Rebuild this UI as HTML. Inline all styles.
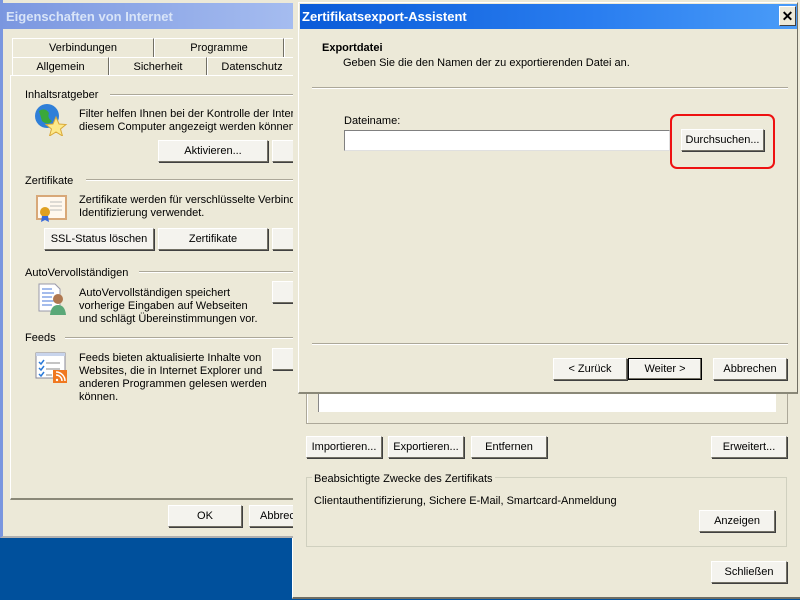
<!DOCTYPE html>
<html><head><meta charset="utf-8"><style>
*{margin:0;padding:0;box-sizing:border-box}
body{width:800px;height:600px;overflow:hidden;background:#00509c;font-family:"Liberation Sans",sans-serif;font-size:11px;color:#000;position:relative}
.a{position:absolute}
.t{position:absolute;white-space:nowrap;line-height:13px}
.btn{position:absolute;background:#f4f3ee;border:1px solid #fff;border-right-color:#716f64;border-bottom-color:#716f64;box-shadow:1px 1px 0 #404040;text-align:center;line-height:20px;white-space:nowrap;overflow:hidden}
.ln{position:absolute;height:2px;border-top:1px solid #aca899;border-bottom:1px solid #fff}
.tab{position:absolute;background:#ece9d8;border:1px solid #fff;border-right-color:#716f64;border-bottom:none;text-align:center;line-height:19px}
</style></head><body>
<!-- back certificate dialog -->
<div class="a" style="left:292px;top:0;width:508px;height:599px;background:#ece9d8;border-left:1px solid #fff;border-bottom:2px solid #716f64"></div>
<div class="a" style="left:306px;top:370px;width:482px;height:54px;border:1px solid #aca899;border-top:none;box-shadow:1px 1px 0 #fff inset"></div>
<div class="a" style="left:318px;top:390px;width:458px;height:22px;background:#fff;border-left:1px solid #888"></div>
<div class="btn" style="left:306px;top:436px;width:76px;height:22px">Importieren...</div>
<div class="btn" style="left:388px;top:436px;width:76px;height:22px">Exportieren...</div>
<div class="btn" style="left:471px;top:436px;width:76px;height:22px">Entfernen</div>
<div class="btn" style="left:711px;top:436px;width:76px;height:22px">Erweitert...</div>
<div class="a" style="left:306px;top:477px;width:481px;height:70px;border:1px solid #d0d0bf"></div>
<div class="t" style="left:312px;top:473px;background:#ece9d8;padding:0 2px">Beabsichtigte Zwecke des Zertifikats</div>
<div class="t" style="left:314px;top:495px">Clientauthentifizierung, Sichere E-Mail, Smartcard-Anmeldung</div>
<div class="btn" style="left:699px;top:510px;width:76px;height:22px">Anzeigen</div>
<div class="btn" style="left:711px;top:561px;width:76px;height:22px">Schließen</div>

<!-- left window -->
<div class="a" style="left:0;top:0;width:293px;height:540px;overflow:hidden">
<div class="a" style="left:0;top:0;width:300px;height:538px;background:#ece9d8;border-left:3px solid #7a96df;border-bottom:2px solid #b0b0b0"></div>
<div class="a" style="left:3px;top:3px;width:297px;height:26px;background:linear-gradient(90deg,#7b97e0,#a6bdf0)"></div>
<div class="t" style="left:6px;top:10px;font-size:13px;font-weight:bold;color:#d8e4f8">Eigenschaften von Internet</div>
<div class="tab" style="left:12px;top:38px;width:142px;height:19px">Verbindungen</div>
<div class="tab" style="left:154px;top:38px;width:130px;height:19px">Programme</div>
<div class="tab" style="left:284px;top:38px;width:12px;height:19px"></div>
<div class="tab" style="left:12px;top:57px;width:97px;height:19px">Allgemein</div>
<div class="tab" style="left:109px;top:57px;width:98px;height:19px">Sicherheit</div>
<div class="tab" style="left:207px;top:57px;width:90px;height:19px">Datenschutz</div>
<div class="a" style="left:10px;top:75px;width:300px;height:425px;border-left:1px solid #fff;border-top:1px solid #fff;border-bottom:2px solid #8a8878"></div>
<div class="t" style="left:25px;top:89px">Inhaltsratgeber</div><div class="ln" style="left:110px;top:94px;width:190px"></div>
<svg class="a" style="left:34px;top:103px" width="34" height="33"><circle cx="13" cy="13" r="12" fill="#2f7fd8"/><path d="M5 8q6-4 10 2q-2 5 3 8q-4 5-10 0z" fill="#3aa83a"/><path d="M22 14l3 7 7 .5-5.5 4.5 2 7-6.5-4-6.5 4 2-7-5.5-4.5 7-.5z" fill="#fde98a" stroke="#d9a93a"/></svg>
<div class="t" style="left:79px;top:108px">Filter helfen Ihnen bei der Kontrolle der Intern</div>
<div class="t" style="left:79px;top:121px">diesem Computer angezeigt werden können.</div>
<div class="btn" style="left:158px;top:140px;width:110px;height:22px">Aktivieren...</div>
<div class="btn" style="left:272px;top:140px;width:30px;height:22px"></div>
<div class="t" style="left:25px;top:175px">Zertifikate</div><div class="ln" style="left:86px;top:179px;width:214px"></div>
<svg class="a" style="left:36px;top:195px" width="32" height="28"><rect x="1" y="1" width="29" height="23" fill="#fff8ee" stroke="#d8a878" stroke-width="2"/><path d="M14 7h12M14 11h12M14 15h12" stroke="#bbb"/><circle cx="9" cy="17" r="5" fill="#e0a020"/><path d="M6 21l-1 6 4-2 4 2-1-6" fill="#3a6ad8"/></svg>
<div class="t" style="left:79px;top:194px">Zertifikate werden für verschlüsselte Verbind</div>
<div class="t" style="left:79px;top:207px">Identifizierung verwendet.</div>
<div class="btn" style="left:44px;top:228px;width:110px;height:22px">SSL-Status löschen</div>
<div class="btn" style="left:158px;top:228px;width:110px;height:22px">Zertifikate</div>
<div class="btn" style="left:272px;top:228px;width:30px;height:22px"></div>
<div class="t" style="left:25px;top:267px">AutoVervollständigen</div><div class="ln" style="left:139px;top:271px;width:161px"></div>
<svg class="a" style="left:38px;top:283px" width="30" height="33"><path d="M1 1h16l5 5v22H1z" fill="#fff" stroke="#99a"/><path d="M4 6h10M4 10h12M4 14h10M4 18h12M4 22h10" stroke="#4a7ad8"/><circle cx="20" cy="16" r="5" fill="#b07850"/><path d="M12 32q1-10 8-10t8 10z" fill="#5aa878"/></svg>
<div class="t" style="left:79px;top:287px">AutoVervollständigen speichert</div>
<div class="t" style="left:79px;top:300px">vorherige Eingaben auf Webseiten</div>
<div class="t" style="left:79px;top:313px">und schlägt Übereinstimmungen vor.</div>
<div class="btn" style="left:272px;top:281px;width:30px;height:22px"></div>
<div class="t" style="left:25px;top:332px">Feeds</div><div class="ln" style="left:65px;top:337px;width:235px"></div>
<svg class="a" style="left:35px;top:352px" width="33" height="32"><rect x="1" y="1" width="29" height="25" fill="#fff" stroke="#889"/><rect x="1" y="1" width="29" height="3" fill="#c8d4ec"/><path d="M4 10l2 2 3-4M4 16l2 2 3-4M4 22l2 2 3-4" stroke="#2a7ad8" stroke-width="1.5" fill="none"/><path d="M11 11h14M11 17h14M11 23h6" stroke="#888"/><rect x="18" y="18" width="14" height="13" fill="#f07820"/><path d="M21 23a6 6 0 0 1 6 6M21 20a9 9 0 0 1 9 9" stroke="#fff" stroke-width="1.5" fill="none"/><circle cx="22" cy="28" r="1.2" fill="#fff"/></svg>
<div class="t" style="left:79px;top:352px">Feeds bieten aktualisierte Inhalte von</div>
<div class="t" style="left:79px;top:365px">Websites, die in Internet Explorer und</div>
<div class="t" style="left:79px;top:378px">anderen Programmen gelesen werden</div>
<div class="t" style="left:79px;top:391px">können.</div>
<div class="btn" style="left:272px;top:348px;width:30px;height:22px"></div>
<div class="btn" style="left:168px;top:505px;width:74px;height:22px">OK</div>
<div class="btn" style="left:249px;top:505px;width:74px;height:22px;text-align:left;padding-left:10px">Abbrechen</div>
</div>

<!-- front wizard -->
<div class="a" style="left:298px;top:2px;width:500px;height:392px;background:#ece9d8;border:1px solid #fff;border-right-color:#716f64;border-bottom:2px solid #8a8878"></div>
<div class="a" style="left:300px;top:4px;width:497px;height:25px;background:linear-gradient(90deg,#0a5bd8,#2a7ef0 60%,#4a9cf8)"></div>
<div class="t" style="left:302px;top:10px;font-size:13px;font-weight:bold;color:#fff">Zertifikatsexport-Assistent</div>
<div class="a" style="left:779px;top:6px;width:17px;height:20px;background:#ece9d8;border:1px solid #fff;border-right-color:#404040;border-bottom-color:#404040;text-align:center;font-weight:bold;font-size:14px;line-height:18px">✕</div>
<div class="t" style="left:322px;top:42px;font-weight:bold">Exportdatei</div>
<div class="t" style="left:343px;top:57px">Geben Sie die den Namen der zu exportierenden Datei an.</div>
<div class="ln" style="left:312px;top:87px;width:476px"></div>
<div class="t" style="left:344px;top:115px">Dateiname:</div>
<div class="a" style="left:344px;top:130px;width:326px;height:21px;background:#fff;border:1px solid #7f9db9;border-color:#808080 #e0e0e0 #e0e0e0 #808080"></div>
<div class="btn" style="left:681px;top:129px;width:83px;height:22px">Durchsuchen...</div>
<div class="a" style="left:670px;top:114px;width:105px;height:55px;border:2px solid #ee1111;border-radius:7px"></div>
<div class="ln" style="left:312px;top:343px;width:476px"></div>
<div class="btn" style="left:553px;top:358px;width:74px;height:22px">&lt; Zurück</div>
<div class="btn" style="left:628px;top:358px;width:74px;height:22px;border:1px solid #000;box-shadow:inset -1px -1px 0 #716f64,inset 1px 1px 0 #fff">Weiter &gt;</div>
<div class="btn" style="left:713px;top:358px;width:74px;height:22px">Abbrechen</div>
</body></html>
